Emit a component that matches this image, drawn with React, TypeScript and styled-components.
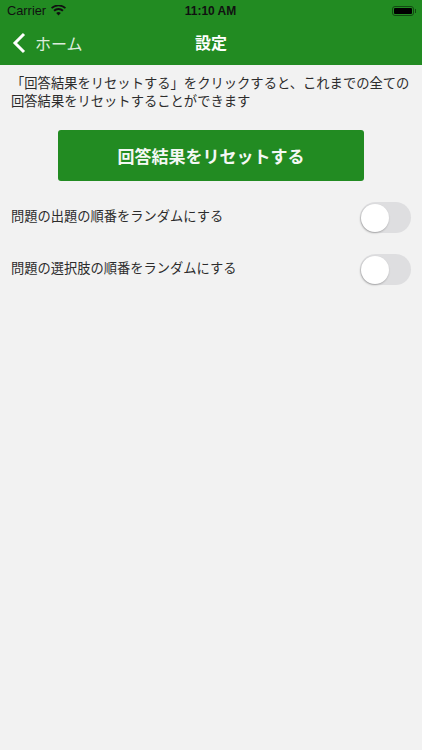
import styled, { createGlobalStyle } from "styled-components";

const GlobalStyle = createGlobalStyle`
  html, body {
    margin: 0;
    padding: 0;
    background: #f2f2f2;
  }
  body {
    font-family: "Liberation Sans", "Noto Sans CJK JP", sans-serif;
  }
`;

const settings = [
  "問題の出題の順番をランダムにする",
  "問題の選択肢の順番をランダムにする",
];

export default function App() {
  return (
    <Page>
      <GlobalStyle />
      <Header>
        <StatusBar>
          <StatusLeft>
            <span>Carrier</span>
            <svg width="15" height="11" viewBox="0 0 15 11">
              <path d="M7.5 10.6 L5.2 8.1 A3.4 3.4 0 0 1 9.8 8.1 Z" fill="#111" />
              <path d="M3.7 6.5 L2.4 5.1 A7.4 7.4 0 0 1 12.6 5.1 L11.3 6.5 A5.5 5.5 0 0 0 3.7 6.5 Z" fill="#111" />
              <path d="M1.1 3.8 L0 2.6 A10.8 10.8 0 0 1 15 2.6 L13.9 3.8 A9.2 9.2 0 0 0 1.1 3.8 Z" fill="#111" />
            </svg>
          </StatusLeft>
          <Clock>11:10 AM</Clock>
          <Battery>
            <BatteryFill />
          </Battery>
        </StatusBar>
        <NavBar>
          <BackLink>
            <svg width="14" height="22" viewBox="0 0 14 22">
              <path d="M12 2 L3 11 L12 20" fill="none" stroke="#fff" strokeWidth="3" />
            </svg>
            <span>ホーム</span>
          </BackLink>
          <Title>設定</Title>
        </NavBar>
      </Header>
      <Content>
        <Description>
          「回答結果をリセットする」をクリックすると、これまでの全ての回答結果をリセットすることができます
        </Description>
        <ResetButton type="button">回答結果をリセットする</ResetButton>
        {settings.map((label) => (
          <SettingRow key={label}>
            <SettingLabel>{label}</SettingLabel>
            <Toggle>
              <Knob />
            </Toggle>
          </SettingRow>
        ))}
      </Content>
    </Page>
  );
}

const Page = styled.div`
  width: 422px;
  height: 750px;
  overflow: hidden;
  background: #f2f2f2;
`;

const Header = styled.header`
  background: #228b22;
  height: 65px;
`;

const StatusBar = styled.div`
  display: grid;
  grid-template-columns: 1fr auto 1fr;
  align-items: center;
  height: 21px;
  padding: 0 7px 0 7px;
  color: #111;
  font-size: 12.8px;
`;

const StatusLeft = styled.div`
  display: flex;
  align-items: center;
  gap: 5px;
`;

const Clock = styled.span`
  margin-left: -1px;
  font-weight: 700;
  font-size: 12px;
`;

const Battery = styled.div`
  position: relative;
  justify-self: end;
  box-sizing: border-box;
  width: 22px;
  height: 10px;
  padding: 1px;
  border: 1px solid #124a12;
  border-radius: 3px;
  margin-right: 1px;

  &::after {
    content: "";
    position: absolute;
    right: -3px;
    top: 2px;
    width: 1px;
    height: 4px;
    background: #124a12;
  }
`;

const BatteryFill = styled.div`
  width: 100%;
  height: 100%;
  background: #000;
  border-radius: 1px;
`;

const NavBar = styled.nav`
  position: relative;
  display: flex;
  align-items: center;
  justify-content: center;
  height: 44px;
  padding-bottom: 2px;
  box-sizing: border-box;
`;

const BackLink = styled.div`
  position: absolute;
  left: 12px;
  top: 10px;
  display: flex;
  align-items: center;
  gap: 9px;
  color: #dcebdc;
  font-size: 16px;
`;

const Title = styled.h1`
  margin: 0;
  color: #fff;
  font-size: 16px;
  font-weight: 700;
`;

const Content = styled.main`
  padding: 10px 11px 0 11px;
  display: flex;
  flex-direction: column;
`;

const Description = styled.p`
  margin: 0;
  color: #2c2c2c;
  font-size: 13.3px;
  line-height: 18px;
`;

const ResetButton = styled.button`
  align-self: center;
  width: 306px;
  height: 51px;
  margin: 19px 0 21px;
  border: none;
  border-radius: 3px;
  background: #228b22;
  color: #f4f8f4;
  font-family: inherit;
  font-size: 17px;
  font-weight: 700;
`;

const SettingRow = styled.div`
  display: flex;
  align-items: center;
  justify-content: space-between;
  height: 31px;
  margin-bottom: 21px;
`;

const SettingLabel = styled.span`
  color: #2c2c2c;
  font-size: 13.25px;
  margin-top: -5px;
`;

const Toggle = styled.div`
  width: 51px;
  height: 31px;
  padding: 1px;
  box-sizing: border-box;
  border-radius: 16px;
  background: #dedee0;
`;

const Knob = styled.div`
  width: 28px;
  height: 28px;
  margin-top: 0.5px;
  border-radius: 50%;
  background: #fff;
  box-shadow: -0.5px 1px 2px rgba(0, 0, 0, 0.28);
`;
